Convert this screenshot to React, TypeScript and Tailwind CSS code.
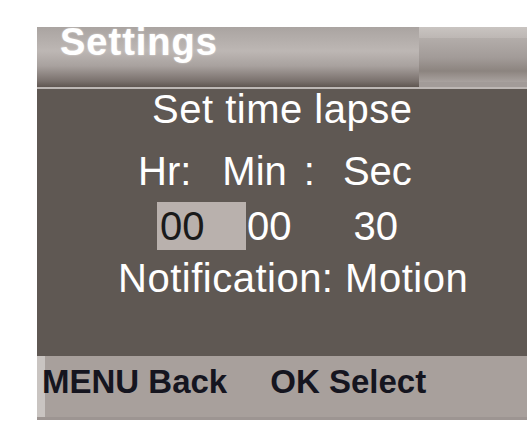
import React from 'react';

const font = { fontFamily: '"Liberation Sans", Arial, sans-serif' };

export default function App() {
  return (
    <div className="w-[527px] h-[425px] bg-white overflow-hidden pt-[27px] pl-[37px]" style={font}>
      <div className="flex flex-col w-[490px]">
        {/* Title bar */}
        <div className="flex h-[60px]">
          <div className="w-[382px] h-full bg-[linear-gradient(to_bottom,#aaa4a1_0%,#bdb7b4_40%,#a8a19e_65%,#7a716d_90%,#5f5651_100%)] pl-[23px]">
            <span className="block text-[38px] leading-[30px] font-bold tracking-[1px] text-white [text-shadow:0_0_2px_rgba(255,255,255,0.6)]">
              Settings
            </span>
          </div>
          <div className="flex-1 flex flex-col bg-[#bfb9b6]">
            <div className="h-[11px] bg-[linear-gradient(to_bottom,#c9c4c1,#bdb7b4)]" />
            <div className="flex-1 bg-[linear-gradient(to_bottom,#b3adaa_0%,#a29b98_45%,#8c847f_75%,#a9a29f_100%)]" />
            <div className="h-[5px] bg-[#a29b98]" />
          </div>
        </div>
        <div className="h-[2px] bg-[#bdb7b4]" />

        {/* Body */}
        <div className="h-[267px] bg-[#5f5853] text-white text-[40px] leading-[40px] tracking-[0.5px] flex flex-col">
          <div className="pl-[115px]">Set time lapse</div>
          <div className="flex mt-[22px] pl-[101px] tracking-normal">
            <span>Hr:</span>
            <span className="ml-[31px]">Min</span>
            <span className="ml-[17px]">:</span>
            <span className="ml-[28px]">Sec</span>
          </div>
          <div className="flex items-center mt-[11px] pl-[120px] tracking-normal">
            <div className="w-[89px] h-[48px] bg-[#b9b1ad] text-[#1a1a1a] flex items-center pl-[3px]">00</div>
            <span className="ml-[1px]">00</span>
            <span className="ml-[62px]">30</span>
          </div>
          <div className="mt-[8px] pl-[81px]">Notification: Motion</div>
        </div>

        {/* Footer */}
        <div className="relative h-[61px] flex bg-[#a8a09c]">
          <div className="w-[8px] h-full bg-[#c9c4c1]" />
          <div className="flex pt-[9px] -ml-[3px] text-[33px] leading-[33px] font-bold text-[#15151f]">
            <span>MENU Back</span>
            <span className="ml-[43px]">OK Select</span>
          </div>
        </div>
        <div className="h-[3px] bg-[#9d9592]" />
      </div>
    </div>
  );
}
